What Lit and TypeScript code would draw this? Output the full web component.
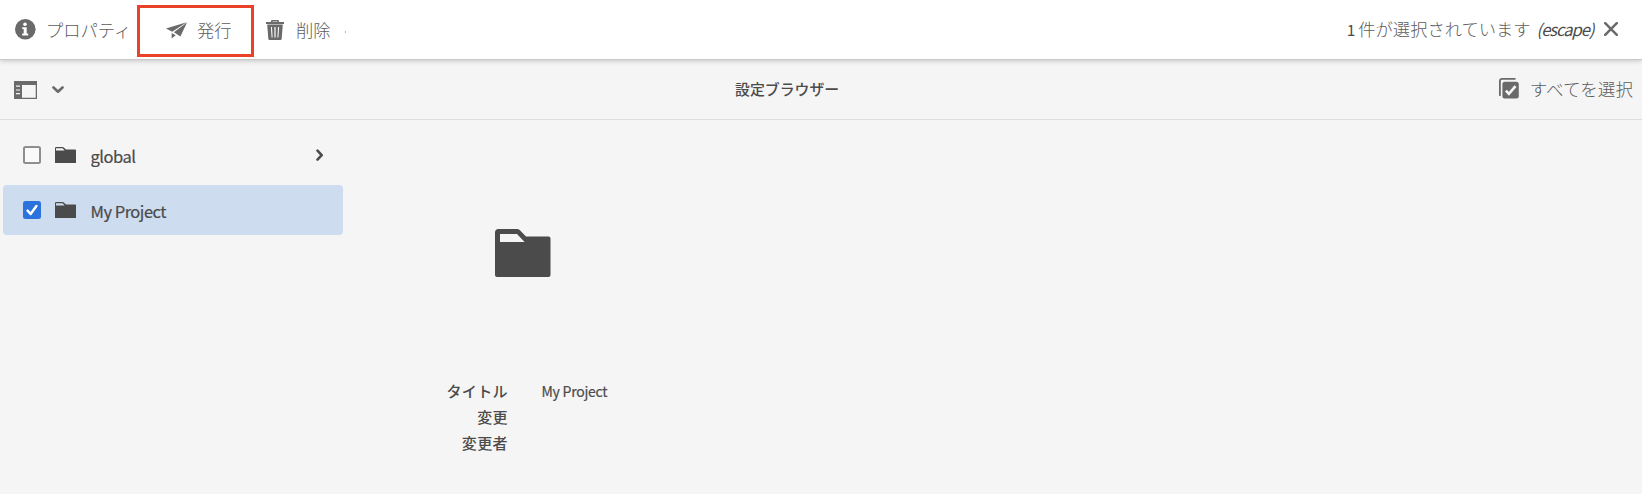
import { LitElement, html, css, svg } from "lit";
import { customElement, property } from "lit/decorators.js";

const shapes: Record<string, unknown> = {
  info: svg`<circle cx="10.3" cy="10.3" r="10.3" fill="currentColor"/><circle cx="10" cy="5.2" r="1.8" fill="#fff"/><path d="M7.2 8.3h4.5v6.3h1.5v1.8H7.2v-1.8h1.5v-4.5H7.2z" fill="#fff"/>`,
  plane: svg`<path fill="currentColor" d="M0 6.5 20.7.2 6.2 9.7zM21 .4 14.4 14.4 7.9 10.3zM5.6 11 9.7 13.2 5.7 16.6z"/>`,
  trash: svg`<path fill="currentColor" fill-rule="evenodd" d="M0 2h5V1.2Q5 0 6.2 0h5.6Q13 0 13 1.2V2h5v2H0zM6.5 2h5v-.6h-5zM1.2 4.6h15.6l-1.1 14.2q-.1 1.2-1.3 1.2H3.6q-1.2 0-1.3-1.2zM4.9 7l.7 10.5h1L6 7zM8.4 7v10.5h1.2V7zM12 7l-.6 10.5h1L13.1 7z"/>`,
  close: svg`<path d="M1.2 1.2 12.8 12.8M12.8 1.2 1.2 12.8" fill="none" stroke="currentColor" stroke-width="2.5" stroke-linecap="round"/>`,
  rail: svg`<path fill="currentColor" fill-rule="evenodd" d="M0 0h23v18H0zM8 4v12.7h13.7V4z"/><path d="M2 5.2h4M2 9h4M2 12.7h4" stroke="#f5f5f5" stroke-width="1.2"/>`,
  down: svg`<path d="m1.5 1.5 4.5 4.2 4.5-4.2" fill="none" stroke="currentColor" stroke-width="2.6" stroke-linecap="round" stroke-linejoin="round"/>`,
  right: svg`<path d="m1.5 1.6 4.2 4.5-4.2 4.5" fill="none" stroke="currentColor" stroke-width="2.6" stroke-linecap="round" stroke-linejoin="round"/>`,
  all: svg`<path d="M.9 17.2V3.2Q.9.9 3.2.9h12.6" fill="none" stroke="currentColor" stroke-width="1.8" stroke-linecap="round"/><rect x="3.4" y="3.8" width="16.4" height="16.8" rx="2.5" fill="currentColor"/><path d="m6.9 12.6 3 3.2 6.6-7.6" fill="none" stroke="#f5f5f5" stroke-width="2.7"/>`,
  folder: svg`<path fill="currentColor" fill-rule="evenodd" d="M0 1.2Q0 0 1.2 0h6.6q.6 0 1 .5L11 2.6h9.3q.7 0 .7.7V16H0zM1 1.2v2.2h8.6L7.6 1.2z"/>`,
  bigFolder: svg`<path fill="currentColor" fill-rule="evenodd" d="M0 3.5Q0 0 3.5 0H22q1.6 0 2.7 1.1L31 7.5h22.5Q55.5 7.5 55.5 9.5V46q0 2-2 2H2q-2 0-2-2zM5 5v8h24.6L22 5z"/>`,
  check: svg`<path d="m4.6 9.6 3 3.4 5.8-8" fill="none" stroke="#fff" stroke-width="2.5" stroke-linecap="round" stroke-linejoin="round"/>`,
};

const icon = (name: string, w: number, h: number) =>
  html`<svg width=${w} height=${h} viewBox="0 0 ${w} ${h}" aria-hidden="true">${shapes[name]}</svg>`;

@customElement("column-item")
class ColumnItem extends LitElement {
  @property() label = "";
  @property({ type: Boolean, reflect: true }) selected = false;
  @property({ type: Boolean }) expandable = false;

  static styles = css`
    :host { display: flex; align-items: center; box-sizing: border-box; height: 50px; padding: 0 19px 0 20px; border-radius: 4px; color: #4b4b4b; font-size: 16.5px; }
    :host([selected]) { background: #cddcef; }
    svg { display: block; flex: none; }
    .box { box-sizing: border-box; width: 18px; height: 18px; border: 2px solid #8e8e8e; border-radius: 2.5px; background: #fafafa; margin-right: 14px; }
    .box.on { border: 0; background: #2c72dd; }
    .label { flex: 1; margin-left: 14.5px; line-height: 24px; padding-top: 2px; letter-spacing: -.5px; -webkit-text-stroke: .2px currentColor; }
  `;

  render() {
    return html`
      <span class="box ${this.selected ? "on" : ""}">${this.selected ? icon("check", 18, 18) : ""}</span>
      ${icon("folder", 21, 16)}
      <span class="label">${this.label}</span>
      ${this.expandable ? icon("right", 8, 12) : ""}
    `;
  }
}

@customElement("app-root")
class AppRoot extends LitElement {
  static styles = css`
    :host { display: flex; flex-direction: column; height: 494px; overflow: hidden; background: #f5f5f5; color: #4b4b4b; font-family: "Noto Sans CJK JP", sans-serif; }
    svg { display: block; flex: none; color: #6a6a6a; }
    .actions { display: flex; align-items: center; box-sizing: border-box; height: 60px; flex: none; background: #fff; border-bottom: 1px solid #c9c9c9; box-shadow: 0 1px 5px rgba(0,0,0,.2); z-index: 1; font-size: 17.3px; font-weight: 300; line-height: 24px; padding: 0 24px 0 15px; }
    .action { display: flex; align-items: center; gap: 11px; white-space: nowrap; }
    .action span, .jp { color: #5c5c5c; }
    .info { gap: 10px; }
    .publish { box-sizing: border-box; width: 117px; height: 52px; margin: 3px 12px 0 5.5px; padding: 0 0 2px 26px; gap: 10px; border: 3px solid #ea4228; }
    .dot { width: 1px; height: 2px; background: #bbb; margin: 4px 0 0 15px; }
    .trash { gap: 12px; }
    .status { display: flex; align-items: center; margin-left: auto; padding-bottom: 1px; }
    .one { font-weight: 400; margin-right: 3px; font-size: 15.5px; }
    .esc { font-style: italic; font-weight: 400; margin: 0 10.5px 0 6px; font-size: 16.5px; letter-spacing: -1px; }
    .bar { display: grid; grid-template-columns: 721px auto 1fr; align-items: center; box-sizing: border-box; height: 60px; flex: none; border-bottom: 1px solid #dedede; padding: 0 9px 0 14px; }
    .rail { display: flex; align-items: center; gap: 15px; }
    .title { font-size: 14.9px; font-weight: 500; margin: 0; padding-bottom: 2px; }
    .all { justify-self: end; font-size: 17.6px; font-weight: 300; padding-bottom: 2px; }
    .content { display: flex; flex: 1; }
    .column { display: flex; flex-direction: column; gap: 5px; width: 340px; padding: 10px 0 0 3px; }
    .preview { display: flex; flex-direction: column; width: 360px; }
    .thumb { padding: 109px 0 0 152px; }
    .thumb svg { color: #4b4b4b; }
    dl { display: grid; grid-template-columns: 165px 1fr; column-gap: 33.5px; grid-auto-rows: 26px; margin: 101px 0 0; line-height: 26px; font-size: 14px; }
    dt { text-align: right; font-weight: 500; font-size: 15px; letter-spacing: .4px; }
    dd { margin: 0; letter-spacing: -.25px; -webkit-text-stroke: .2px currentColor; }
  `;

  render() {
    return html`
      <header class="actions">
        <div class="action info">${icon("info", 21, 21)}<span>プロパティ</span></div>
        <div class="action publish">${icon("plane", 21, 17)}<span>発行</span></div>
        <div class="action trash">${icon("trash", 18, 20)}<span>削除</span></div>
        <i class="dot"></i>
        <div class="status"><span class="one">1</span><span class="jp">件が選択されています</span><span class="esc">(escape)</span>${icon("close", 14, 14)}</div>
      </header>
      <nav class="bar">
        <div class="rail">${icon("rail", 23, 18)}${icon("down", 12, 8)}</div>
        <h1 class="title">設定ブラウザー</h1>
        <div class="action all">${icon("all", 20, 21)}<span>すべてを選択</span></div>
      </nav>
      <main class="content">
        <section class="column">
          <column-item label="global" expandable></column-item>
          <column-item label="My Project" selected></column-item>
        </section>
        <section class="preview">
          <div class="thumb">${icon("bigFolder", 56, 48)}</div>
          <dl>
            <dt>タイトル</dt><dd>My Project</dd>
            <dt>変更</dt><dd></dd>
            <dt>変更者</dt><dd></dd>
          </dl>
        </section>
      </main>
    `;
  }
}
